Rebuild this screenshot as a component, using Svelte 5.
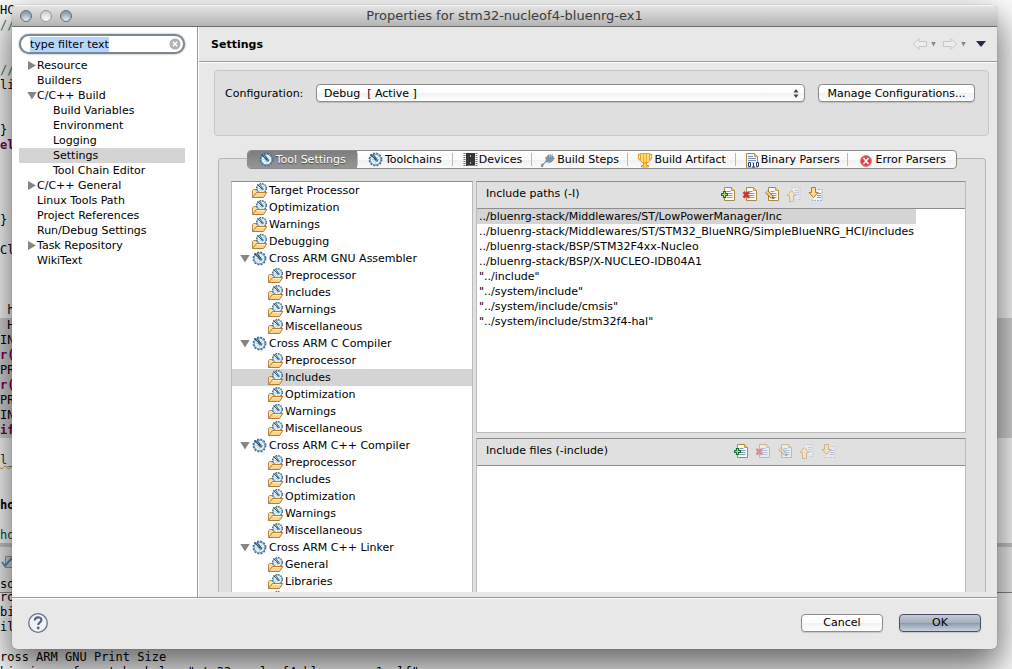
<script>
  import { onMount } from 'svelte';

  let filterBox;
  onMount(() => {
    filterBox.focus();
    filterBox.select();
  });

  const nav = [
    { t: 'Resource', a: 'closed' },
    { t: 'Builders' },
    { t: 'C/C++ Build', a: 'open' },
    { t: 'Build Variables', child: true },
    { t: 'Environment', child: true },
    { t: 'Logging', child: true },
    { t: 'Settings', child: true, sel: true },
    { t: 'Tool Chain Editor', child: true },
    { t: 'C/C++ General', a: 'closed' },
    { t: 'Linux Tools Path' },
    { t: 'Project References' },
    { t: 'Run/Debug Settings' },
    { t: 'Task Repository', a: 'closed' },
    { t: 'WikiText' }
  ];

  const tools = [
    { t: 'Target Processor' },
    { t: 'Optimization' },
    { t: 'Warnings' },
    { t: 'Debugging' },
    { t: 'Cross ARM GNU Assembler', items: ['Preprocessor', 'Includes', 'Warnings', 'Miscellaneous'] },
    {
      t: 'Cross ARM C Compiler',
      items: ['Preprocessor', 'Includes', 'Optimization', 'Warnings', 'Miscellaneous'],
      sel: 1
    },
    {
      t: 'Cross ARM C++ Compiler',
      items: ['Preprocessor', 'Includes', 'Optimization', 'Warnings', 'Miscellaneous']
    },
    { t: 'Cross ARM C++ Linker', items: ['General', 'Libraries', 'Miscellaneous'] }
  ];

  const tabs = [
    ['wheel', 'Tool Settings'],
    ['wheel', 'Toolchains'],
    ['chip', 'Devices'],
    ['steps', 'Build Steps'],
    ['cup', 'Build Artifact'],
    ['binary', 'Binary Parsers'],
    ['error', 'Error Parsers']
  ];

  const paths = [
    '../bluenrg-stack/Middlewares/ST/LowPowerManager/Inc',
    '../bluenrg-stack/Middlewares/ST/STM32_BlueNRG/SimpleBlueNRG_HCI/includes',
    '../bluenrg-stack/BSP/STM32F4xx-Nucleo',
    '../bluenrg-stack/BSP/X-NUCLEO-IDB04A1',
    '"../include"',
    '"../system/include"',
    '"../system/include/cmsis"',
    '"../system/include/stm32f4-hal"'
  ];

  const actions = [
    ['add', 'Add'],
    ['delete', 'Delete'],
    ['edit', 'Edit'],
    ['up', 'Move up'],
    ['down', 'Move down']
  ];

  // Editor lines behind the dialog, keyed by row: [text, style]
  const code = {
    1: ['HC', ''],
    2: ['//', 'comment'],
    5: ['//', 'comment'],
    6: ['li', ''],
    9: ['}', ''],
    10: ['el', 'keyword'],
    15: ['}', ''],
    17: ['Cl', ''],
    21: [' h', ''],
    22: [' H', ''],
    23: ['IN', ''],
    24: ['r(', 'keyword'],
    25: ['PR', ''],
    26: ['r(', 'keyword'],
    27: ['PR', ''],
    28: ['IN', ''],
    29: ['if', 'keyword'],
    31: ['l_', 'warn'],
    34: ['ho', 'strong'],
    36: ['ho', 'field']
  };
  const editorRows = Array.from({ length: 37 }, (_, i) => code[i] ?? ['', '']);
  const consoleRows = ['ro', 'bi', 'il', '', 'ross ARM GNU Print Size', 'bi-size --format=berkeley "stm32-nucleof4-bluenrg-ex1.elf"'];
</script>

{#snippet wheelShape()}
  <circle cx="7.5" cy="7.5" r="5.400" fill="#eaf3f6" stroke="#6f9dbb" stroke-width="1.200" />
  <circle cx="7.5" cy="7.5" r="6.300" fill="none" stroke="#3f7096" stroke-width="1.300" stroke-dasharray="2 1.300" />
  <path d="M7.500 3.500v8M3.500 7.500h8M10.500 4.500l-6 6" stroke="#a9c6d6" stroke-width=".8" />
  <path d="M2.500 2.500 8.500 8.500M5 2.500l4 5" stroke="#2d5474" stroke-width="1.200" />
  <circle cx="9" cy="8.500" r="1.300" fill="#4d7c9d" />
{/snippet}

{#snippet page()}
  <path d="M4.500 1.500h7l3 3v10h-10z" fill="#f8faff" stroke="#a98a3f" />
  <path d="M11.500 1.500v3h3" fill="#e9d48e" stroke="#c19a3d" />
  <path d="M6.500 5.500h4M6.500 7.500h6M6.500 9.500h6M6.500 11.500h6" stroke="#7e9cc7" />
{/snippet}

{#snippet icon(kind)}
  <svg class="icon" viewBox="0 0 16 16" aria-hidden="true">
    {#if kind === 'wheel'}
      {@render wheelShape()}
    {:else if kind === 'folder'}
      <path d="M.500 14.500v-7l1-1h3l1 1h6v6" fill="#f7dfa5" stroke="#b98a3e" />
      <g transform="translate(3.500 -.5) scale(.8)">{@render wheelShape()}</g>
      <path d="M.500 14.500 4.500 9.500h10.300l-3.300 5z" fill="#fbd58c" stroke="#b97b32" />
      <path d="M5 10.500h8" stroke="#fff0c8" />
    {:else if kind === 'chip'}
      <path d="M2.500 1v14M14.500 1v14" stroke="#77736b" stroke-width="2" stroke-dasharray="1 1" />
      <rect x="4" y="1" width="9" height="13" fill="#353535" />
      <path d="M5 13.500h8" stroke="#777" />
      <path d="M8.500 3v2M8.500 10v2" stroke="#aaa" />
    {:else if kind === 'steps'}
      <path d="M1 15v-3l3-1 2-3-1-2 4-4 1 2 1-2 1 2 1-1v2l2 1-3 4-3 1-2-1-3 2-1 3z" fill="#8197a7" />
      <path d="M8 2.500h6M9 4.500h6" stroke="#b7c4cc" stroke-dasharray="1 1" />
    {:else if kind === 'cup'}
      <path d="M4 2.500H1.500v4l2 2H5M12 2.500h2.500v4l-2 2H11" fill="none" stroke="#eea329" stroke-width="1.400" />
      <path d="M3.500 1.500h9v7l-1.500 2H5l-1.500-2z" fill="#ffe07b" stroke="#efa02a" />
      <path d="M6.500 2v8M9.500 2v8" stroke="#f1ad39" />
      <path d="M6.500 11h3v2.500h2v1.500h-7v-1.500h2z" fill="#ffd568" stroke="#e79620" />
    {:else if kind === 'binary'}
      <path d="M2.500 15.500v-14h8l3 3v11z" fill="#f5f8ff" stroke="#ad8742" />
      <path d="M10.500 1.500v3h3" fill="#edc878" stroke="#c79332" />
      <path d="M4 4.500h5M4 6.500h8M4 8.500h8" stroke="#7891bb" />
      <path d="M3 10h12v5.500H3z" fill="#f2f5fb" />
      <path d="M4.500 10.500h2v4h-2zM12.500 10.500h2v4h-2zM8.500 11h1v4M8 15h3" fill="none" stroke="#263d69" />
    {:else if kind === 'error'}
      <circle cx="8" cy="9" r="5.500" fill="#df4049" stroke="#e58087" />
      <path d="m5.500 6 5 6m0-6-5 6" stroke="#fff" stroke-width="1.500" />
    {:else if kind === 'add'}
      {@render page()}
      <path d="M4.500 5v7M1 8.500h7" stroke="#176b31" stroke-width="3.200" />
      <path d="M4.500 6v5M2 8.500h5" stroke="#a2da77" stroke-width="1.200" />
    {:else if kind === 'delete'}
      {@render page()}
      <path d="m1.500 6 5.500 5.500m0-5.500-5.500 5.500" stroke="#d12e39" stroke-width="2.600" />
    {:else if kind === 'edit'}
      {@render page()}
      <path d="m2.500 5.500 6 6" stroke="#93703a" stroke-width="3.800" />
      <path d="m2.500 5.500 6 6" stroke="#f4ce81" stroke-width="2" />
      <path d="m8 10.500 3 2.500-3-.5z" fill="#4b4033" />
    {:else if kind === 'up'}
      <path d="M5 1.500h9v12h-4" fill="#f2f5fc" stroke="#9eafd0" stroke-dasharray="2 1" />
      <path d="M9 4.500h4M9 6.500h4M10 8.500h3" stroke="#a3b5d5" />
      <path d="m5.500 4.500 4.500 5H7.500v6h-4v-6H1z" fill="#ffe8a4" stroke="#bb8739" />
    {:else if kind === 'down'}
      <path d="M4 13.500v1h10v-11h-4" fill="#f2f5fc" stroke="#9eafd0" stroke-dasharray="2 1" />
      <path d="M9 7.500h4M9 9.500h4M9 11.500h4" stroke="#7f98c4" />
      <path d="M3.500 1.500h4v5H10l-4.500 5-4.500-5h2.500z" fill="#ffe08c" stroke="#b17b2c" />
    {/if}
  </svg>
{/snippet}

{#snippet toolbar(firstOnly)}
  <div class="toolbar">
    {#each actions as [kind, name], i}
      <button class="tool" aria-label={name} disabled={firstOnly ? i > 0 : kind === 'up'}>{@render icon(kind)}</button>
    {/each}
  </div>
{/snippet}

<div class="desktop">
  <div class="behind" aria-hidden="true">
    <div class="editor">
      {#each editorRows as [text, style], i}
        <div class={['line', style, i >= 22 && i < 30 && 'marked']}>{text}</div>
      {/each}
    </div>
    <div class="view-tabs">
      <svg viewBox="0 0 16 16"><path d="M5.500 3.500h10v11h-10z" fill="#ddd" stroke="#a79680" /><path d="m2 9 3 4 7-8" fill="none" stroke="#5b90bd" stroke-width="2" /></svg>
    </div>
    <div class="view-name">so</div>
    <div class="console">
      {#each consoleRows as row}<div class="line">{row}</div>{/each}
    </div>
  </div>

  <main class="dialog">
    <header class="titlebar">
      <div class="lights">
        <button class="light" aria-label="Close"></button>
        <button class="light pale" aria-label="Minimize"></button>
        <button class="light" aria-label="Zoom"></button>
      </div>
      <span>Properties for stm32-nucleof4-bluenrg-ex1</span>
    </header>

    <div class="body">
      <aside>
        <div class="filter">
          <input bind:this={filterBox} type="text" value="type filter text" aria-label="Filter" />
          <button class="clear" aria-label="Clear">
            <svg viewBox="0 0 12 12"><circle cx="6" cy="6" r="5.500" fill="#b0b0b0" /><path d="m3.800 3.800 4.400 4.400m0-4.400L3.800 8.200" stroke="#fff" stroke-width="1.400" /></svg>
          </button>
        </div>
        <nav>
          {#each nav as n}
            <button class={['nav-row', n.child && 'child', n.sel && 'selected']}>
              <span class={['arrow', n.a]}></span>{n.t}
            </button>
          {/each}
        </nav>
      </aside>

      <section class="content">
        <div class="heading">
          <h1>Settings</h1>
          <div class="history">
            <button aria-label="Back" disabled><svg width="16" height="14" viewBox="0 0 16 14"><path d="M1.500 7 7 1.500v3h7.500v5H7v3z" fill="#ededed" stroke="#c6c6c6" /></svg></button>
            <button aria-label="Back history" disabled><i class="tiny"></i></button>
            <button aria-label="Forward" disabled><svg width="16" height="14" viewBox="0 0 16 14"><path d="M14.500 7 9 1.500v3H1.500v5H9v3z" fill="#ededed" stroke="#c6c6c6" /></svg></button>
            <button aria-label="Forward history" disabled><i class="tiny"></i></button>
            <button aria-label="Menu"><i class="menu"></i></button>
          </div>
        </div>

        <div class="config">
          <label for="configuration">Configuration:</label>
          <div class="select">
            <select id="configuration"><option>Debug&nbsp; [ Active ]</option></select>
            <svg viewBox="0 0 6 9" aria-hidden="true"><path d="M3 0 5.500 3.500h-5zM3 9 .500 5.500h5z" fill="#444" /></svg>
          </div>
          <button class="push manage">Manage Configurations...</button>
        </div>

        <div class="group">
          <div class="tabs" role="tablist">
            {#each tabs as [kind, name], i}
              <button role="tab" aria-selected={i === 0} class={['tab', i === 0 && 'active']}>{@render icon(kind)}<span>{name}</span></button>
            {/each}
          </div>

          <div class="panes">
            <div class="tree">
              {#each tools as tool}
                <button class="tree-row">
                  <span class={['arrow', tool.items && 'open']}></span>{@render icon(tool.items ? 'wheel' : 'folder')}<span>{tool.t}</span>
                </button>
                {#each tool.items ?? [] as item, i}
                  <button class={['tree-row', 'child', tool.sel === i && 'selected']}>{@render icon('folder')}<span>{item}</span></button>
                {/each}
              {/each}
            </div>

            <div class="lists">
              <section class="list paths">
                <div class="list-head"><h2>Include paths (-I)</h2>{@render toolbar(false)}</div>
                <div class="entries">
                  {#each paths as path, i}
                    <button class={['entry', i === 0 && 'selected']}>{path}</button>
                  {/each}
                </div>
              </section>
              <section class="list files">
                <div class="list-head"><h2>Include files (-include)</h2>{@render toolbar(true)}</div>
              </section>
            </div>
          </div>
        </div>
      </section>
    </div>

    <footer>
      <button class="help" aria-label="Help">
        <svg viewBox="0 0 22 22"><circle cx="11" cy="11" r="9.300" fill="#f1f2f5" stroke="#63718d" stroke-width="1.300" /><path d="M7.800 8.600c0-4.300 6.600-4.200 6.600-.6 0 2.500-3.200 2.400-3.200 5" fill="none" stroke="#566684" stroke-width="2.200" /><circle cx="11.200" cy="16" r="1.400" fill="#566684" /></svg>
      </button>
      <div class="actions">
        <button class="push">Cancel</button>
        <button class="push default">OK</button>
      </div>
    </footer>
  </main>
</div>

<style>
  :global(body) { margin: 0; }
  * { box-sizing: border-box; }
  button, input, select { font: inherit; color: inherit; margin: 0; }
  button { border: 0; padding: 0; background: none; text-align: left; white-space: nowrap; }
  svg { display: block; }

  .desktop {
    position: relative;
    display: flex;
    height: 100vh;
    min-height: 480px;
    padding: 5px 15px 20px 12px;
    overflow: hidden;
    background: #fff;
    font: 11px/15px "Lucida Grande", "DejaVu Sans", sans-serif;
    color: #000;
  }
  .behind {
    position: absolute;
    inset: 0;
    overflow: hidden;
    font: 12px/15px Monaco, "DejaVu Sans Mono", monospace;
  }
  .editor { margin-top: -12px; }
  .line { height: 15px; white-space: pre; }
  .marked { background: #d8d8d8; }
  .comment { color: #3f7f5f; }
  .keyword { color: #7f0055; font-weight: bold; }
  .strong { font-weight: bold; }
  .field { color: #005032; }
  .warn { color: #005032; text-decoration: underline wavy #d9a82c 1px; }
  .view-tabs { height: 34px; border-top: 4px solid #ccc; padding-top: 6px; background: #f4f4f4; }
  .view-tabs svg { width: 16px; height: 16px; }
  .view-name { height: 16px; border-bottom: 1px solid #888; background: #f4f4f4; }
  .console { margin-top: -3px; }

  .dialog {
    position: relative;
    flex: 1;
    min-width: 0;
    display: flex;
    flex-direction: column;
    border-radius: 5px;
    overflow: hidden;
    background: #e8e8e8;
    box-shadow: 0 0 1px rgba(0, 0, 0, .5), 0 16px 36px 4px rgba(0, 0, 0, .58);
  }
  .titlebar {
    position: relative;
    flex: none;
    height: 22px;
    text-align: center;
    font-size: 13px;
    line-height: 22px;
    color: #3c3c3c;
    background: linear-gradient(#e6e6e6, #b4b4b4);
    border-bottom: 1px solid #6d6d6d;
    box-shadow: inset 0 1px #f5f5f5;
  }
  .lights { position: absolute; left: 8px; top: 5px; display: flex; gap: 8px; }
  .light {
    width: 12px;
    height: 12px;
    border-radius: 50%;
    border: 1px solid #66707b;
    background: radial-gradient(circle at 50% 90%, #e3edf5, #a3b0bd 55%, #7b8894);
  }
  .light.pale { border-color: #999; background: radial-gradient(circle at 50% 90%, #fff, #dcdcdc 60%, #bbb); }

  .body { flex: 1; min-height: 0; display: flex; border-bottom: 1px solid #979797; }
  aside { flex: none; width: 186px; padding: 7px 12px 0 7px; background: #fff; border-right: 1px solid #999; }
  .filter {
    display: flex;
    align-items: center;
    height: 20px;
    padding: 0 2px 0 9px;
    border: 2px solid #7c8792;
    border-radius: 10px;
    box-shadow: 0 0 2px #7c8792;
    background: #fff;
  }
  .filter input { flex: 1; min-width: 0; height: 15px; padding: 0; border: 0; outline: 0; background: none; }
  .filter input::selection { background: #b4d5fe; color: #000; }
  .clear svg { width: 12px; height: 12px; }
  nav { display: flex; flex-direction: column; margin-top: 4px; }
  .nav-row { display: flex; align-items: center; height: 15px; padding-left: 8px; }
  .nav-row.child { padding-left: 24px; }
  .arrow { flex: none; width: 10px; height: 8px; }
  .closed { height: 9px; background: #858585; clip-path: polygon(1px 0, 9px 50%, 1px 100%); }
  .open { background: #858585; clip-path: polygon(0 0, 100% 0, 50% 100%); }
  .selected { background: #d4d4d4; }

  .content {
    flex: 1;
    min-width: 0;
    display: flex;
    flex-direction: column;
    border-left: 1px solid #fff;
    padding-bottom: 5px;
  }
  .heading {
    flex: none;
    display: flex;
    justify-content: space-between;
    align-items: center;
    height: 35px;
    padding: 0 11px 0 12px;
    border-bottom: 1px solid #999;
    box-shadow: 0 1px #fff;
  }
  h1, h2 { margin: 0; font-size: 11px; }
  h2 { font-weight: normal; }
  .history { display: flex; align-items: center; gap: 2px; }
  .tiny, .menu { display: block; background: #858585; clip-path: polygon(0 0, 100% 0, 50% 100%); width: 5px; height: 5px; margin: 0 4px 0 1px; }
  .menu { width: 10px; height: 6px; background: #33234a; margin: 0 0 0 4px; }

  .config {
    flex: none;
    display: flex;
    align-items: flex-start;
    height: 66px;
    margin: 8px 8px 0 15px;
    padding: 13px 13px 0 10px;
    background: #dfdfdf;
    border: 1px solid #c6c6c6;
    border-radius: 4px;
  }
  label { width: 91px; line-height: 20px; white-space: nowrap; }
  .select { position: relative; flex: 1; min-width: 0; margin-right: 13px; }
  .select select, .push {
    height: 18px;
    border: 1px solid #8c8c8c;
    border-radius: 4px;
    background: linear-gradient(#fff, #fdfdfd 50%, #f1f1f1 51%, #fff);
    box-shadow: 0 1px 1px rgba(0, 0, 0, .15);
    line-height: 15px;
  }
  .select select { display: block; width: 100%; appearance: none; padding: 0 16px 0 7px; }
  .select svg { position: absolute; right: 6px; top: 5px; width: 6px; height: 9px; }
  .push { min-width: 82px; text-align: center; }
  .manage { width: 157px; }
  .default { border-color: #4b4c66; background: linear-gradient(#c3cad5, #a5afbf 48%, #8f9cb0 52%, #c6d3dc); }

  .group {
    flex: 1;
    min-height: 0;
    display: flex;
    flex-direction: column;
    margin: 22px 11px 0 19px;
    border: 1px solid #b5b5b5;
    border-bottom: 0;
    border-radius: 4px 4px 0 0;
    background: #e0e0e0;
  }
  .tabs {
    flex: none;
    display: grid;
    grid-template-columns: 109fr 96fr 79fr 97fr 108fr 113fr 109fr;
    height: 19px;
    margin: -9px 28px 0;
    border: 1px solid #8a8a8a;
    border-radius: 4px;
    overflow: hidden;
    background: linear-gradient(#fff, #fbfbfb 50%, #f0f0f0 51%, #fafafa);
  }
  .tab { display: flex; align-items: center; justify-content: center; gap: 1px; min-width: 0; height: 17px; line-height: 17px; }
  .tab + .tab { border-left: 1px solid transparent; border-image: linear-gradient(transparent 15%, #bbb 15%, #bbb 85%, transparent 85%) 1; }
  .tab.active { color: #fff; background: linear-gradient(#7d7d7d, #959595); text-shadow: 0 1px 1px #444; }
  .icon { flex: none; width: 16px; height: 16px; }

  .panes { flex: 1; min-height: 0; display: flex; gap: 3px; margin: 12px 19px 0 12px; }
  .tree {
    flex: none;
    width: 242px;
    overflow: hidden;
    background: #fff;
    border: 1px solid #bbb;
    border-top-color: #8d8d8d;
    border-bottom: 0;
  }
  .tree-row { display: flex; align-items: center; width: 100%; height: 17px; padding-left: 8px; gap: 1px; }
  .tree-row .arrow { margin-right: 1px; }
  .tree-row.child { padding-left: 36px; }
  .lists { flex: 1; min-width: 0; display: flex; flex-direction: column; gap: 5px; }
  .list { min-height: 0; display: flex; flex-direction: column; background: #fff; border: 1px solid #bbb; border-top-color: #8d8d8d; }
  .paths { flex: 252 1 0; }
  .files { flex: 154 1 0; border-bottom: 0; }
  .list-head {
    flex: none;
    display: flex;
    align-items: flex-start;
    justify-content: space-between;
    height: 27px;
    padding: 4px 141px 0 9px;
    background: #e0e0e0;
    border-bottom: 1px solid #8d8d8d;
  }
  .files .list-head { padding-right: 128px; }
  .toolbar { display: flex; gap: 6px; }
  .tool:disabled { opacity: .45; }
  .entries { align-self: flex-start; display: flex; flex-direction: column; }
  .entry { height: 15px; padding: 0 2px; }

  footer {
    flex: none;
    display: flex;
    justify-content: space-between;
    align-items: center;
    height: 51px;
    padding: 0 16px 2px 15px;
    box-shadow: inset 0 1px #fff;
  }
  .help svg { width: 22px; height: 22px; }
  .actions { display: flex; gap: 16px; }
</style>
